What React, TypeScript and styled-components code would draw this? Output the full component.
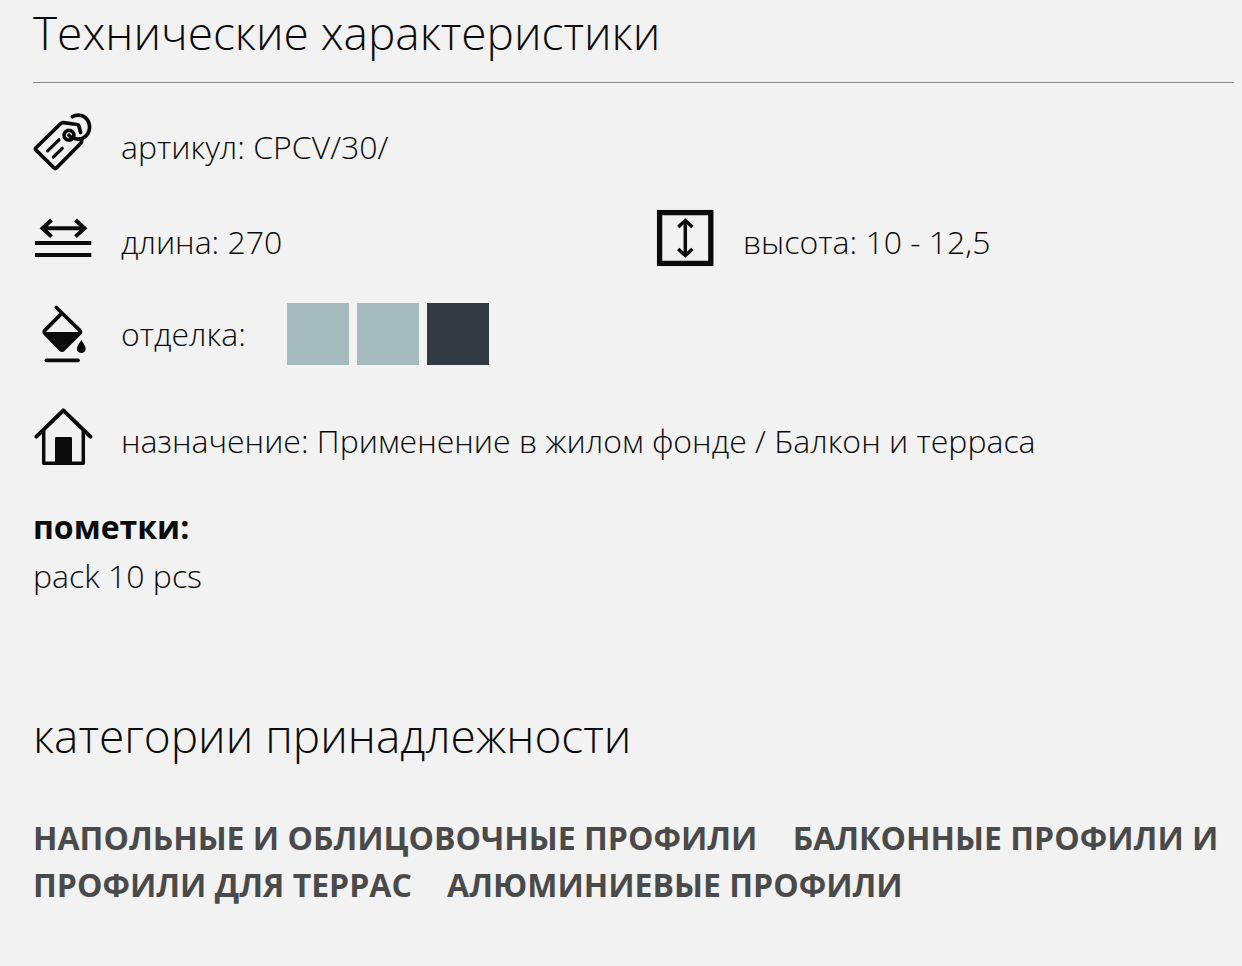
import React from "react";
import styled, { createGlobalStyle } from "styled-components";

const GlobalStyle = createGlobalStyle`
  body {
    margin: 0;
    background: #f2f2f2;
    color: #0a0a0a;
    font-family: "Open Sans", "Noto Sans", sans-serif;
    font-size: 32px;
    font-weight: 300;
    line-height: 52px;
  }
`;

const Page = styled.main`
  padding: 2px 8px 56px 33px;
`;

const Title = styled.h2`
  margin: 0;
  font-size: 46px;
  font-weight: 300;
  line-height: 60px;
`;

const SpecTitle = styled(Title)`
  padding-bottom: 20px;
  border-bottom: 1px solid #8a8a8a;
`;

const Specs = styled.div`
  display: grid;
  grid-template-columns: 1fr 1fr;
  gap: 35px 43px;
  padding-top: 30px;
`;

const Spec = styled.div<{ $wide?: boolean; $centered?: boolean }>`
  display: flex;
  align-items: ${(p) => (p.$centered ? "center" : "flex-end")};
  gap: 28px;
  grid-column: ${(p) => (p.$wide ? "1 / -1" : "auto")};
  padding-bottom: ${(p) => (p.$centered ? "7px" : "0")};
`;

const Icon = styled.svg`
  flex: none;
  width: 60px;
  height: 60px;
  fill: none;
  stroke: #0a0a0a;
  stroke-linecap: round;
  stroke-linejoin: round;
`;

const Swatches = styled.div`
  display: flex;
  gap: 8px;
  margin-left: 13px;
`;

const Swatch = styled.span<{ $color: string }>`
  width: 62px;
  height: 62px;
  background: ${(p) => p.$color};
`;

const Notes = styled.section`
  padding-top: 35px;
  line-height: 49px;
`;

const NotesTitle = styled.h3`
  margin: 0;
  font-size: 32px;
  font-weight: 700;
`;

const Text = styled.p`
  margin: 0;
`;

const Categories = styled.section`
  padding-top: 105px;
`;

const Links = styled.nav`
  padding-top: 49px;
  line-height: 47px;
`;

const CategoryLink = styled.a`
  margin-right: 27px;
  color: #4a4a4a;
  font-weight: 700;
  text-decoration: none;
  text-transform: uppercase;
`;

const TagIcon = () => (
  <Icon viewBox="0 0 60 60" strokeWidth="3.7" aria-hidden="true">
    <path d="M47.6 19.5 45.8 12.8Q45.5 11.7 44 11.5L30.4 9.6Q28.8 9.4 27.8 10.5L3 34.8Q2 36 3 37.1L21.2 55Q22.3 56 23.4 55L47.8 30.2Q48.8 29.2 48.6 27.5L48.4 26" />
    <circle cx="36" cy="22.3" r="4.9" />
    <path d="M36 22.3C38 25 44 27 49 25.5C56 22.5 58 15 55.5 9C52.3 1.8 44.5 .8 39.5 3.7" />
    <path strokeWidth="3.2" d="M26 26.8 14.6 37.8M29.3 35.3 20.3 44.1" />
  </Icon>
);

const LengthIcon = () => (
  <Icon viewBox="0 0 60 60" strokeWidth="4" aria-hidden="true">
    <path strokeLinecap="butt" d="M2 35H58.3M2 47H58.3" />
    <path strokeLinecap="butt" strokeLinejoin="miter" d="M10 20.3H51M18.5 12 9.5 20.3 18.5 28.6M42.5 12 51.5 20.3 42.5 28.6" />
  </Icon>
);

const HeightIcon = () => (
  <Icon viewBox="0 0 60 60" strokeWidth="3.5" aria-hidden="true">
    <rect x="4.6" y="4.6" width="51.2" height="50.8" strokeWidth="5.3" strokeLinejoin="miter" />
    <path strokeLinecap="butt" strokeLinejoin="miter" d="M30.3 12V48M23.2 19 30.3 12.5 37.4 19M23.2 41 30.3 47.5 37.4 41" />
  </Icon>
);

const BucketIcon = () => (
  <Icon viewBox="0 0 60 60" strokeWidth="3.7" aria-hidden="true">
    <path d="M23.3 3.5 46.8 26.4Q48 27.8 46.8 29.2L30.6 45.3Q29 46.8 27.4 45.3L11.9 29.4Q10.6 27.9 11.9 26.4L28.6 9.4" />
    <path stroke="none" fill="#0a0a0a" d="M11 28H48L30 46.5H28ZM48.3 36C46.5 39 43.9 41.8 43.9 44.7A4.4 4.4 0 0 0 52.7 44.7C52.7 41.8 50.1 39 48.3 36Z" />
    <path d="M13.4 56.3H45" />
  </Icon>
);

const HouseIcon = () => (
  <Icon viewBox="0 0 60 60" strokeWidth="3.5" aria-hidden="true">
    <path strokeWidth="4" d="M3.4 29.6 30.3 3.4 57.4 29.6" />
    <path d="M10.7 24V56.3H50.3V24" />
    <rect x="22" y="30" width="17" height="27" rx="1" stroke="none" fill="#0a0a0a" />
  </Icon>
);

const finishes = ["#a5babc", "#a5babc", "#303841"];
const categories = [
  "Напольные и облицовочные профили",
  "Балконные профили и профили для террас",
  "Алюминиевые профили",
];

export default function App() {
  return (
    <>
      <GlobalStyle />
      <Page>
        <SpecTitle>Технические характеристики</SpecTitle>
        <Specs>
          <Spec $wide>
            <TagIcon />
            <Text>артикул: CPCV/30/</Text>
          </Spec>
          <Spec>
            <LengthIcon />
            <Text>длина: 270</Text>
          </Spec>
          <Spec>
            <HeightIcon />
            <Text>высота: 10 - 12,5</Text>
          </Spec>
          <Spec $wide $centered>
            <BucketIcon />
            <Text>отделка:</Text>
            <Swatches>
              {finishes.map((color, i) => (
                <Swatch key={i} $color={color} />
              ))}
            </Swatches>
          </Spec>
          <Spec $wide>
            <HouseIcon />
            <Text>назначение: Применение в жилом фонде / Балкон и терраса</Text>
          </Spec>
        </Specs>
        <Notes>
          <NotesTitle>пометки:</NotesTitle>
          <Text>pack 10 pcs</Text>
        </Notes>
        <Categories>
          <Title>категории принадлежности</Title>
          <Links>
            {categories.map((name) => (
              <React.Fragment key={name}>
                <CategoryLink href="#">{name}</CategoryLink>{" "}
              </React.Fragment>
            ))}
          </Links>
        </Categories>
      </Page>
    </>
  );
}
